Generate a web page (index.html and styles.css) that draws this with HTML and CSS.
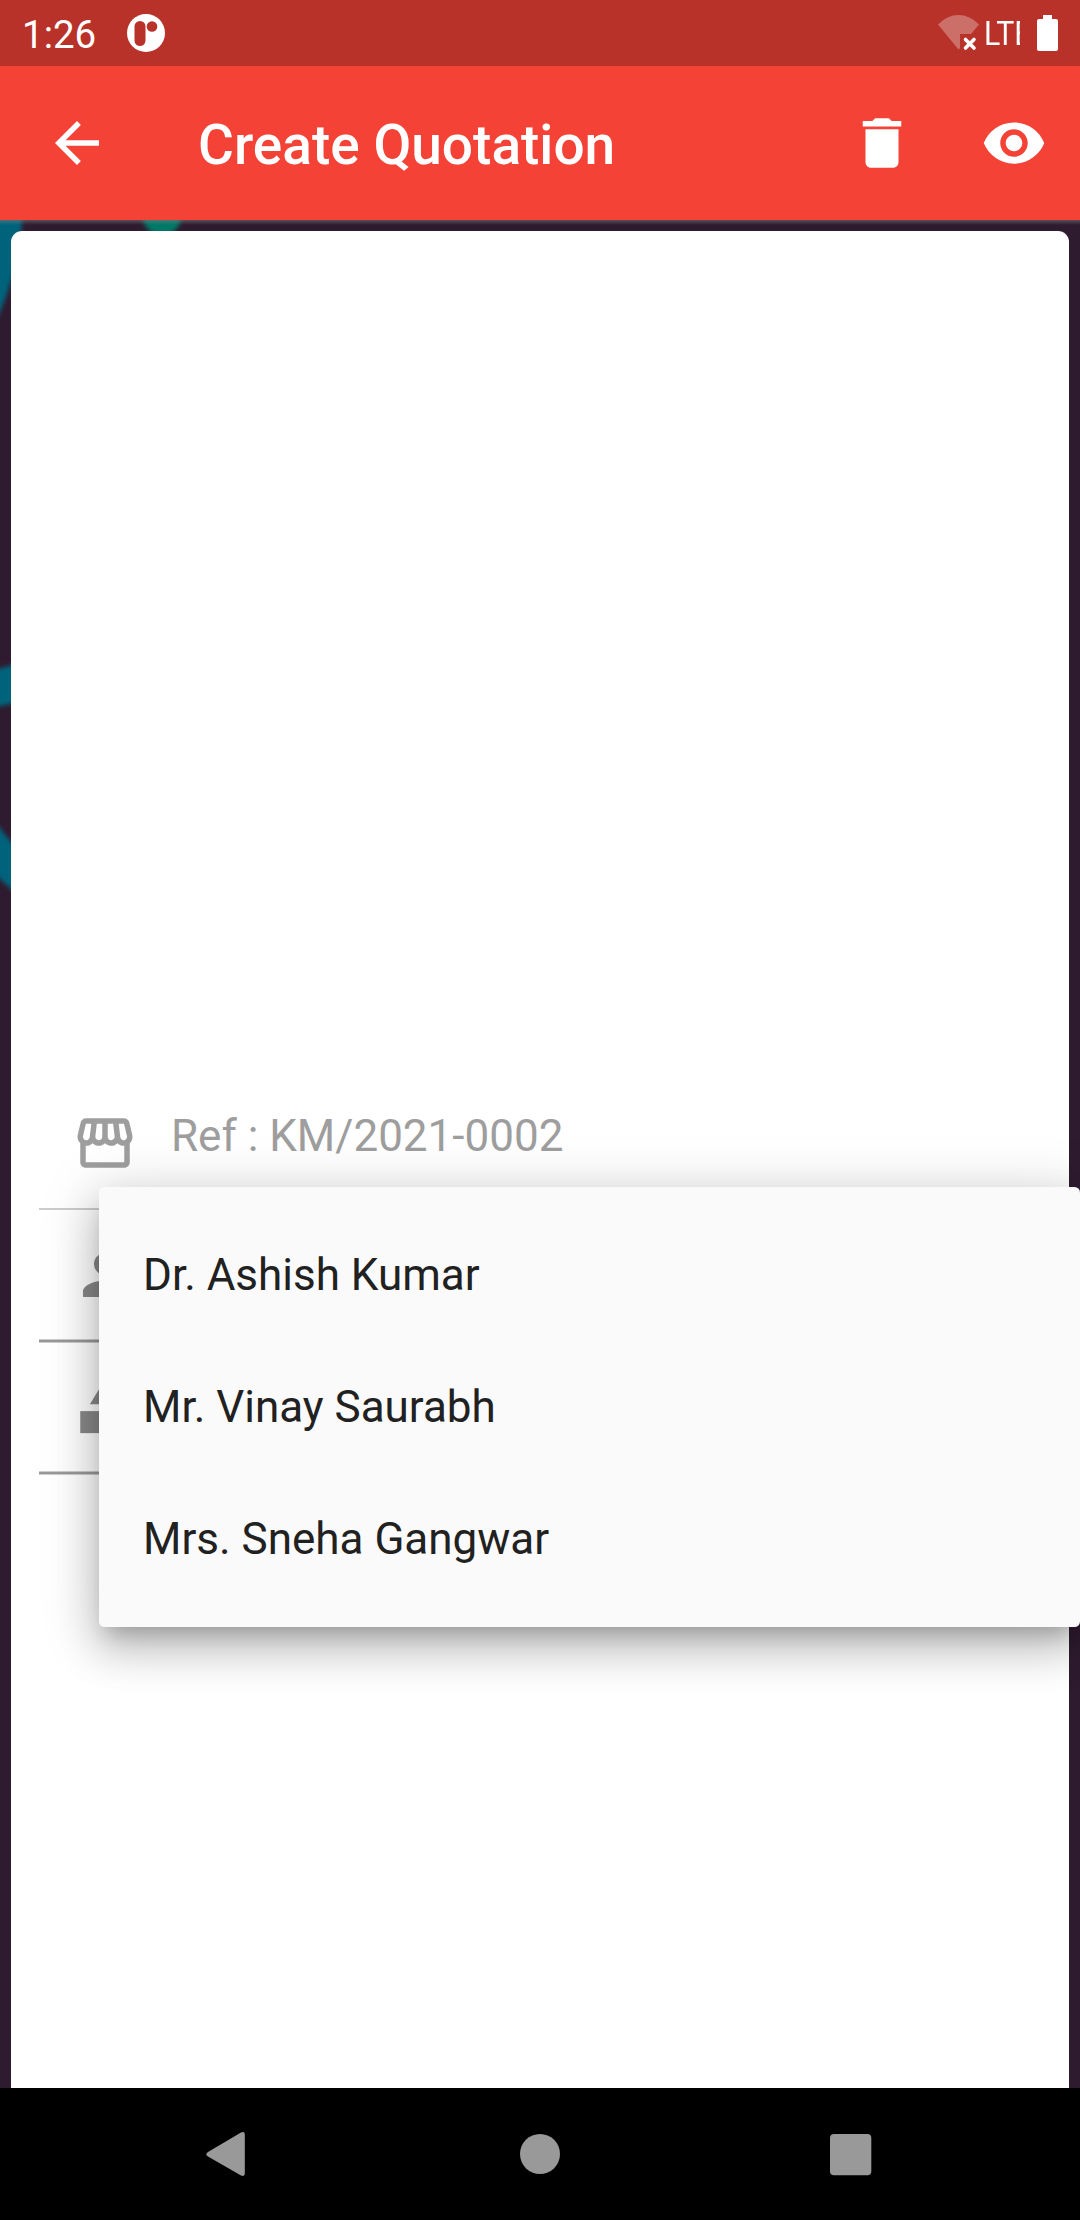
FILE: index.html
```html
<!DOCTYPE html>
<html lang="en">
<head>
<meta charset="utf-8">
<title>Create Quotation</title>
<link rel="stylesheet" href="styles.css">
</head>
<body>
<div class="screen">
  <header class="status">
    <span class="clock">1:26</span>
    <svg class="notice" viewBox="0 0 38 38"><circle cx="19" cy="19" r="19" fill="#fff"/><rect x="7.5" y="7" width="11" height="25" rx="5.5" fill="#b83229"/><circle cx="25" cy="12.5" r="5.3" fill="#b83229"/></svg>
    <div class="signals">
      <svg class="wifi" viewBox="0 0 42 36"><path d="M0 9.5Q9 0 20.500 0T41 9.500L33 19H22V33L20.500 34.500Z" fill="#fff" fill-opacity=".3"/><path d="M27.500 24.500l8.500 8.500m0-8.500l-8.500 8.500" stroke="#fff" stroke-width="3.600" stroke-linecap="round"/></svg>
      <span class="network"><span class="condensed">LTE</span></span>
      <svg class="battery" viewBox="0 0 21 36"><path d="M6 0h9v4h4a2 2 0 0 1 2 2v28a2 2 0 0 1-2 2H2a2 2 0 0 1-2-2V6a2 2 0 0 1 2-2h4z" fill="#fff"/></svg>
    </div>
  </header>
  <nav class="appbar">
    <svg class="back" viewBox="0 0 24 24"><path d="M20 11H7.830l5.590-5.590L12 4l-8 8 8 8 1.410-1.410L7.830 13H20v-2z"/></svg>
    <h1 class="title">Create Quotation</h1>
    <svg class="action" viewBox="0 0 24 24"><path d="M6 19c0 1.100.9 2 2 2h8c1.100 0 2-.9 2-2V7H6v12zM19 4h-3.500l-1-1h-5l-1 1H5v2h14V4z"/></svg>
    <svg class="action" viewBox="0 0 24 24"><path d="M12 4.500C7 4.500 2.730 7.610 1 12c1.730 4.390 6 7.500 11 7.500s9.270-3.110 11-7.500c-1.730-4.390-6-7.500-11-7.500zM12 17c-2.760 0-5-2.240-5-5s2.240-5 5-5 5 2.240 5 5-2.240 5-5 5zm0-8c-1.660 0-3 1.340-3 3s1.340 3 3 3 3-1.340 3-3-1.340-3-3-3z"/></svg>
  </nav>
  <main class="body">
    <svg class="wallpaper" viewBox="0 0 1080 1868">
      <defs>
        <filter id="soft"><feGaussianBlur stdDeviation="2"/></filter>
        <linearGradient id="edge" x1="0" y1="0" x2="0" y2="1"><stop offset="0" stop-color="#808080" stop-opacity=".5"/><stop offset="1" stop-color="#808080" stop-opacity="0"/></linearGradient>
      </defs>
      <g fill="#00647c" filter="url(#soft)">
        <path d="M-10 -10H23Q20 45 0 92L-10 112Z"/>
        <path d="M-10 451L20 443V482L-10 488Z"/>
        <path d="M-10 596L20 633V677L-10 650Z"/>
        <ellipse cx="162" cy="-3" rx="19" ry="18" fill="#007868"/>
      </g>
      <rect width="1080" height="5" fill="url(#edge)"/>
    </svg>
    <section class="card">
      <div class="field locked">
        <svg class="icon" viewBox="0 0 24 24"><path d="M21.900 8.890l-1.050-4.370c-.22-.9-1-1.520-1.910-1.520H5.050c-.9 0-1.690.63-1.900 1.520L2.100 8.890c-.24 1.020-.02 2.060.62 2.880.08.11.19.19.28.29V19c0 1.100.9 2 2 2h14c1.100 0 2-.9 2-2v-6.940c.09-.09.2-.18.28-.28.64-.82.87-1.870.62-2.890zm-2.990-3.900l1.050 4.370c.1.420.01.84-.25 1.170-.14.18-.44.47-.94.47-.61 0-1.140-.49-1.210-1.140L16.980 5l1.930-.01zM13 5h1.960l.54 4.520c.05.39-.07.78-.33 1.070-.22.26-.54.41-.95.41-.67 0-1.220-.59-1.220-1.310V5zM8.490 9.520L9.040 5H11v4.690c0 .72-.55 1.310-1.290 1.310-.34 0-.65-.15-.89-.41-.25-.29-.37-.68-.33-1.070zm-4.450-.16L5.050 5h1.970l-.58 4.860c-.08.65-.6 1.140-1.210 1.140-.49 0-.8-.29-.93-.47-.27-.32-.36-.75-.26-1.170zM5 19v-6.030c.08.010.15.030.23.030.87 0 1.660-.36 2.240-.95.6.6 1.400.95 2.310.95.87 0 1.650-.36 2.230-.93.590.57 1.390.93 2.290.93.84 0 1.640-.35 2.240-.95.58.59 1.370.95 2.240.95.080 0 .15-.02.23-.03V19H5z"/></svg>
        <span class="value">Ref : KM/2021-0002</span>
      </div>
      <div class="field">
        <svg class="icon" viewBox="0 0 24 24"><path d="M12 12c2.210 0 4-1.790 4-4s-1.790-4-4-4-4 1.790-4 4 1.790 4 4 4zm0 2c-2.670 0-8 1.340-8 4v2h16v-2c0-2.660-5.330-4-8-4z"/></svg>
      </div>
      <div class="field">
        <svg class="icon" viewBox="0 0 24 24"><path d="M12 2l-5.500 9h11z"/><circle cx="17.500" cy="17.500" r="4.500"/><path d="M3 13.500h8v8H3z"/></svg>
      </div>
    </section>
    <ul class="menu">
      <li>Dr. Ashish Kumar</li>
      <li>Mr. Vinay Saurabh</li>
      <li>Mrs. Sneha Gangwar</li>
    </ul>
  </main>
  <footer class="navbar">
    <svg viewBox="0 0 48 48"><path d="M7 22L40 2.500Q43.800 1 43.800 4.500V43.500Q43.800 47 40 45.500L7 26.500Q3.500 24.300 7 22Z"/></svg>
    <svg class="home" viewBox="0 0 48 48"><circle cx="24" cy="24" r="20"/></svg>
    <svg viewBox="0 0 48 48"><rect x="4" y="4" width="41.300" height="41.300" rx="4"/></svg>
  </footer>
</div>
</body>
</html>
```
FILE: styles.css
```css
* { box-sizing: border-box; }
body { margin: 0; font-family: Roboto, sans-serif; }
svg { display: block; flex: none; }
.screen { width: 1080px; height: 2220px; display: flex; flex-direction: column; overflow: hidden; }

.status { height: 66px; background: #b83229; color: #fff; display: flex; align-items: center; padding: 0 22px; }
.clock { font-size: 38.5px; line-height: 66px; width: 105px; padding-top: 3px; }
.notice { width: 38px; height: 38px; }
.signals { margin-left: auto; display: flex; align-items: center; }
.wifi { width: 42px; height: 36px; }
.network { width: 36px; margin: 0 17px 0 4px; overflow: hidden; font-size: 34px; line-height: 64px; }
.condensed { display: inline-block; transform: scaleX(.89); transform-origin: left; }
.battery { width: 21px; height: 36px; }

.appbar { height: 154px; background: #f44336; color: #fff; fill: #fff; display: flex; align-items: center; padding: 0 33px 0 44px; }
.back { width: 66px; height: 66px; }
.title { margin: 0 auto 0 88px; padding-top: 3px; font-size: 55px; font-weight: 500; line-height: 64px; }
.action { width: 66px; height: 66px; }
.action + .action { margin-left: 66px; }

.body { flex: 1; min-height: 0; position: relative; background: #2f1b30; padding: 11px 11px 0; }
.wallpaper { position: absolute; inset: 0; width: 1080px; height: 1868px; }
.card { position: relative; height: 1857px; background: #fff; border-radius: 11px 11px 0 0; padding: 847px 28px 0; }
.field { height: 132px; display: flex; align-items: flex-start; gap: 33px; padding: 32px 33px 0; border-bottom: 2px solid #999; box-shadow: 0 1px #ccc, inset 0 -1px #ccc; fill: #898989; }
.locked { border-bottom-color: #ccc; box-shadow: none; fill: #9e9e9e; }
.icon { width: 66px; height: 66px; }
.value { color: #9e9e9e; font-size: 44px; line-height: 52px; }

.menu { position: absolute; left: 99px; top: 967px; width: 981px; height: 440px; margin: 0; padding: 22px 0; list-style: none; background: #fafafa; border-radius: 5.5px; box-shadow: 0 14px 19px -8px rgba(0,0,0,.2), 0 22px 40px 3px rgba(0,0,0,.16), 0 8px 56px 6px rgba(0,0,0,.15); }
.menu li { height: 132px; line-height: 132px; padding-left: 44px; font-size: 44px; color: #212121; }

.navbar { height: 132px; background: #000; fill: #999; display: flex; justify-content: space-between; padding: 42px 206px 0 201px; }
.navbar svg { width: 48px; height: 48px; }
.navbar .home { margin-left: 5px; }
```
